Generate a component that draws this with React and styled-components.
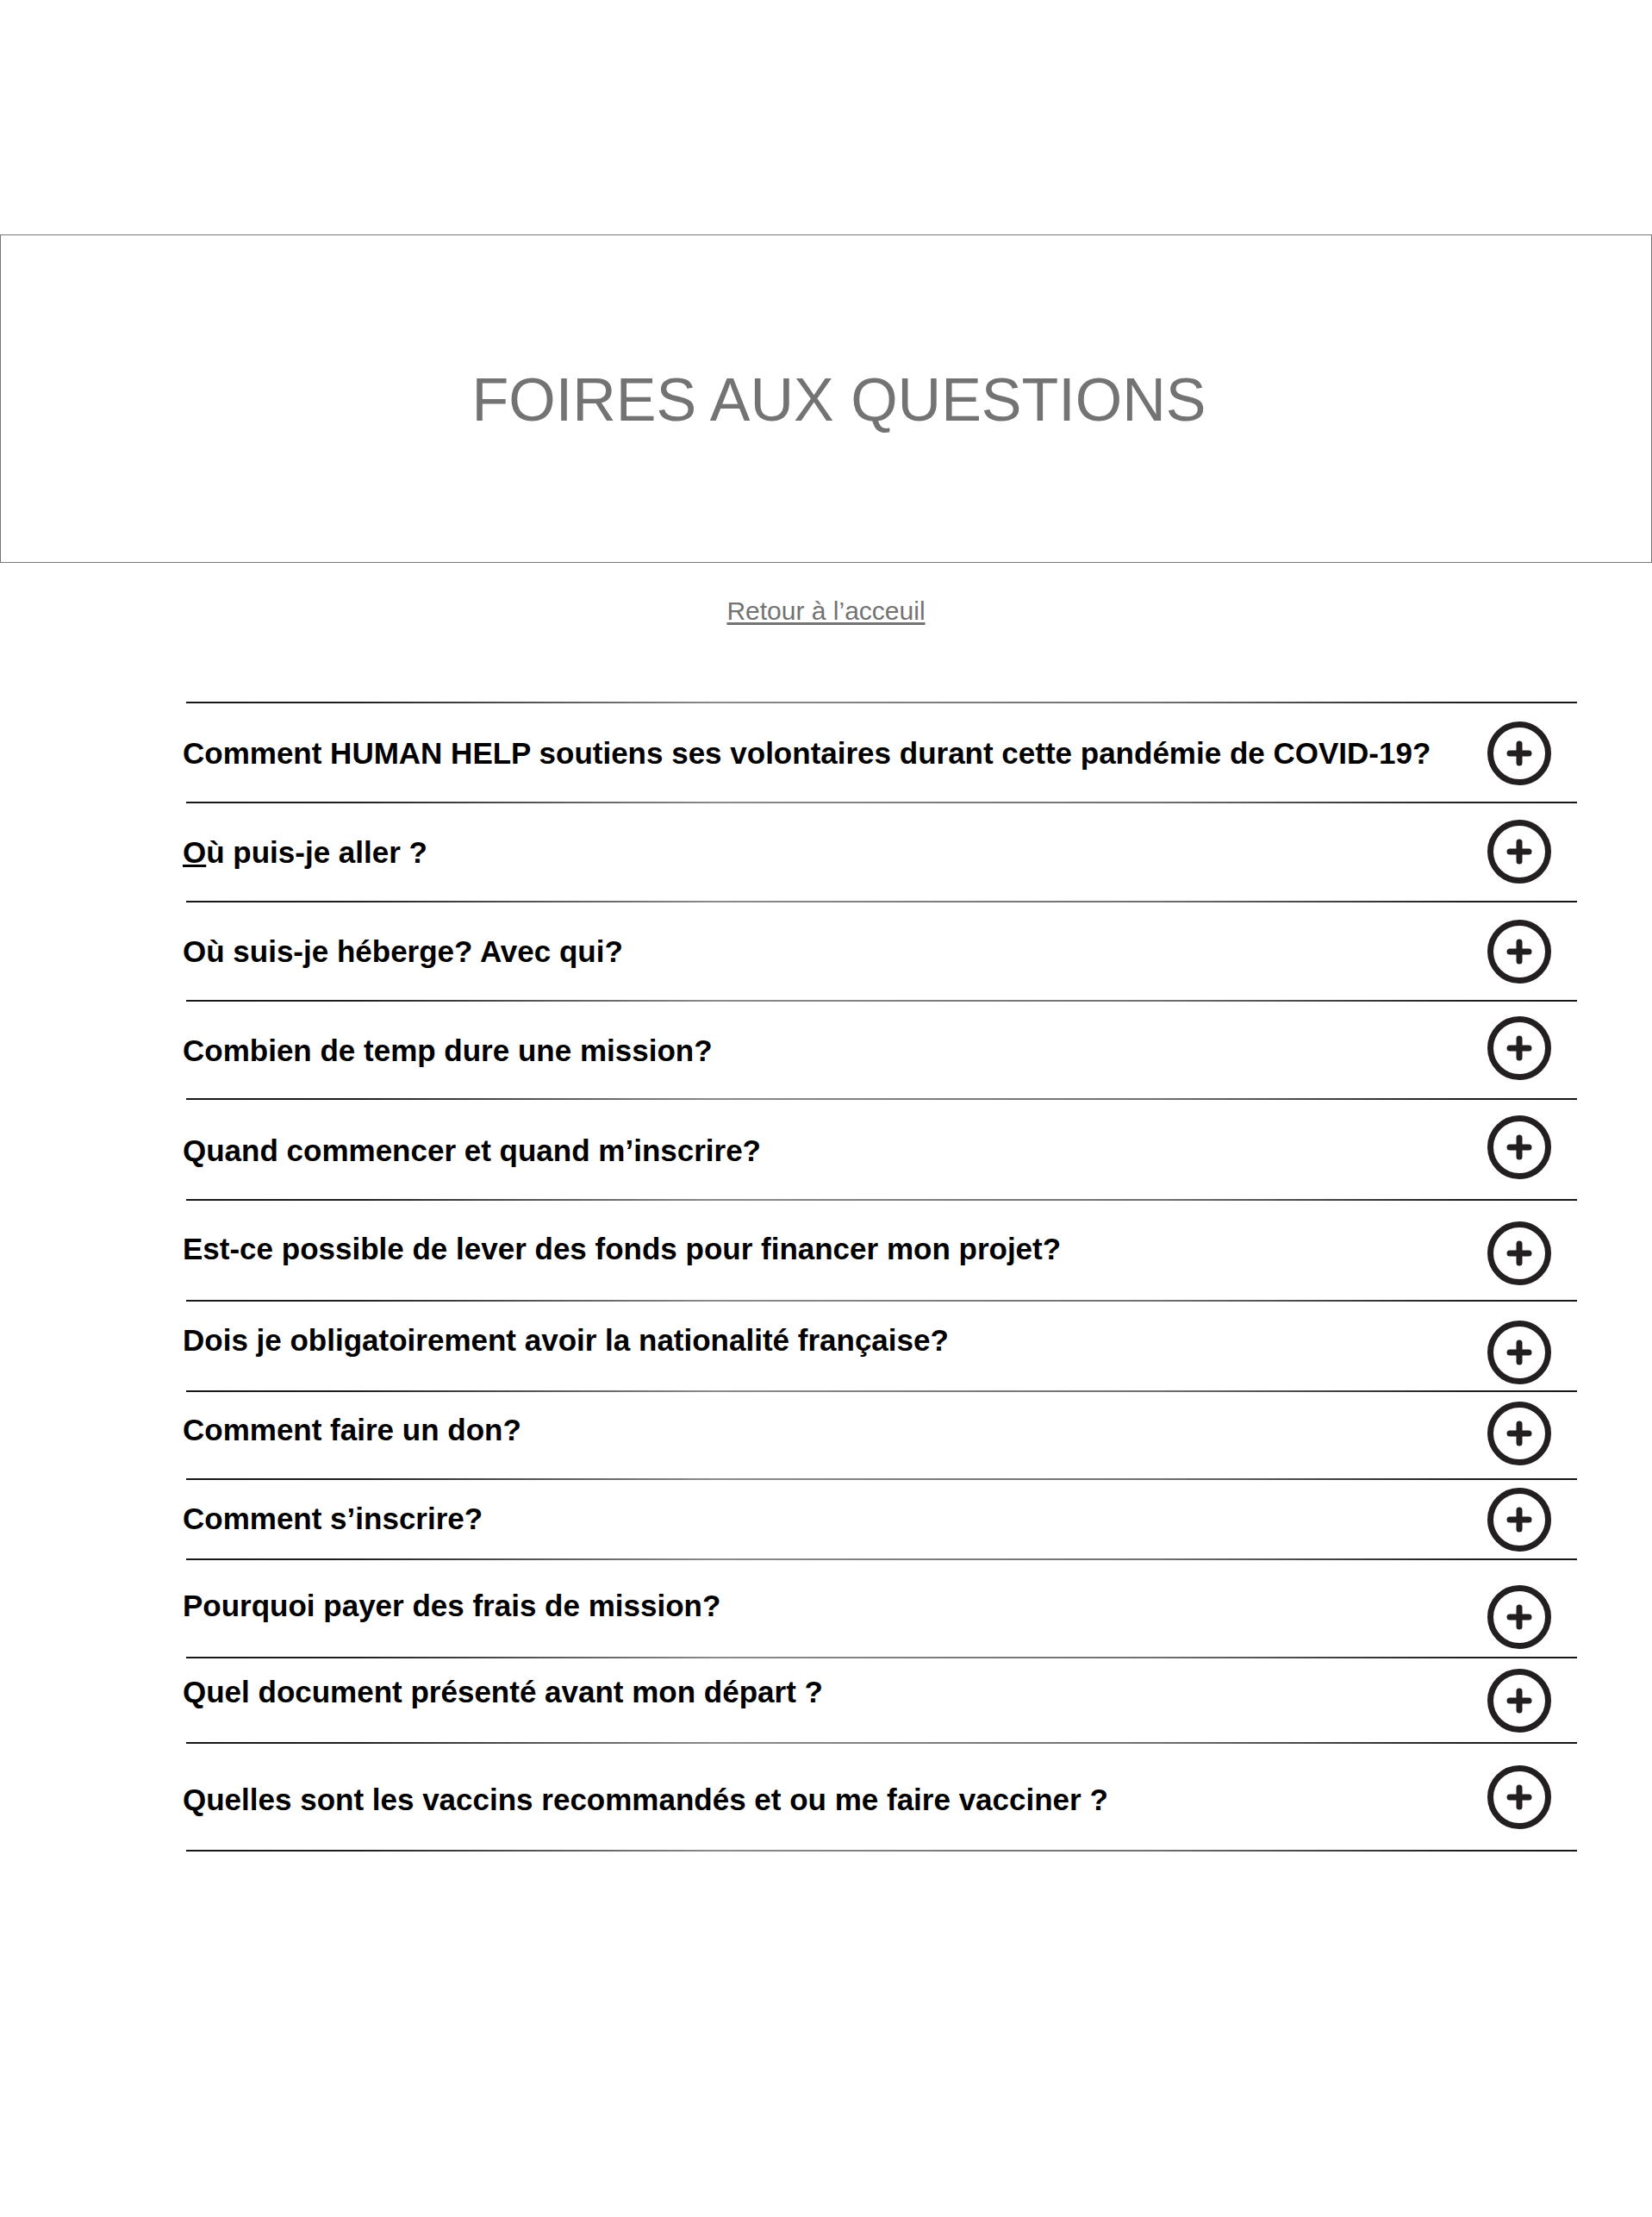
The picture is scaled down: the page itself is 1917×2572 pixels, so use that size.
import React from 'react';
import styled, { createGlobalStyle } from 'styled-components';

const GlobalStyle = createGlobalStyle`
  html, body {
    margin: 0;
    padding: 0;
    background: #ffffff;
  }
  body {
    font-family: 'Liberation Sans', Arial, sans-serif;
  }
  * {
    box-sizing: border-box;
  }
`;

const Page = styled.div`
  width: 1917px;
  min-height: 2572px;
  padding-top: 272px;
  background: #fff;
`;

const Banner = styled.header`
  width: 100%;
  height: 381px;
  border: 1px solid #777777;
  padding: 156px 0 0 30px;
  text-align: center;
`;

const Title = styled.h1`
  margin: 0;
  font-size: 70px;
  line-height: 1;
  font-weight: 400;
  color: #737373;
  letter-spacing: 0;
`;

const BackRow = styled.div`
  margin-top: 41px;
  text-align: center;
`;

const BackLink = styled.a`
  font-size: 30px;
  line-height: 1;
  color: #737373;
  text-decoration: underline;
  text-underline-offset: 3px;
  cursor: pointer;
`;

const FaqList = styled.section`
  width: 1618px;
  margin: 90px 0 0 212px;
  display: flex;
  flex-direction: column;
`;

const Divider = styled.div`
  height: 2px;
  margin-left: 4px;
  background: linear-gradient(
    to right,
    #161616 0%,
    #1e1e1e 12%,
    #8a8a8a 38%,
    #6f6f6f 70%,
    #1e1e1e 92%,
    #161616 100%
  );
`;

const Row = styled.div`
  display: flex;
  justify-content: space-between;
  align-items: flex-start;
  height: ${(p) => p.$h}px;
`;

const Question = styled.p`
  margin: ${(p) => p.$top}px 0 0 0;
  font-size: 35px;
  line-height: 35px;
  font-weight: 700;
  color: #000;
  white-space: nowrap;
`;

const ToggleButton = styled.button`
  margin: ${(p) => p.$top}px 30px 0 0;
  padding: 0;
  width: 74px;
  height: 74px;
  border: none;
  background: transparent;
  cursor: pointer;
  display: flex;
`;

const PlusCircle = () => (
  <svg width="74" height="74" viewBox="0 0 74 74" fill="none">
    <circle cx="37" cy="37" r="33.5" stroke="#231f20" strokeWidth="7" />
    <path
      d="M26 37H48M37 26V48"
      stroke="#231f20"
      strokeWidth="7"
      strokeLinecap="round"
    />
  </svg>
);

const faqs = [
  { q: 'Comment HUMAN HELP soutiens ses volontaires durant cette pandémie de COVID-19?', h: 114, t: 40, i: 21 },
  { q: 'Où puis-je aller ?', h: 113, t: 39, i: 19, underlineFirst: true },
  { q: 'Où suis-je héberge? Avec qui?', h: 113, t: 39, i: 20 },
  { q: 'Combien de temp dure une mission?', h: 112, t: 39, i: 17 },
  { q: 'Quand commencer et quand m’inscrire?', h: 115, t: 41, i: 18 },
  { q: 'Est-ce possible de lever des fonds pour financer mon projet?', h: 115, t: 38, i: 24 },
  { q: 'Dois je obligatoirement avoir la nationalité française?', h: 103, t: 27, i: 22 },
  { q: 'Comment faire un don?', h: 100, t: 26, i: 11 },
  { q: 'Comment s’inscrire?', h: 91, t: 27, i: 9 },
  { q: 'Pourquoi payer des frais de mission?', h: 112, t: 35, i: 29 },
  { q: 'Quel document présenté avant mon départ ?', h: 97, t: 21, i: 12 },
  { q: 'Quelles sont les vaccins recommandés et ou me faire vacciner ?', h: 123, t: 47, i: 25 },
];

function FaqItem({ item }) {
  return (
    <>
      <Divider />
      <Row $h={item.h}>
        <Question $top={item.t}>
          {item.underlineFirst ? (
            <>
              <u>{item.q[0]}</u>
              {item.q.slice(1)}
            </>
          ) : (
            item.q
          )}
        </Question>
        <ToggleButton $top={item.i} aria-label="Ouvrir">
          <PlusCircle />
        </ToggleButton>
      </Row>
    </>
  );
}

function App() {
  return (
    <Page>
      <GlobalStyle />
      <Banner>
        <Title>FOIRES AUX QUESTIONS</Title>
      </Banner>
      <BackRow>
        <BackLink>Retour à l’acceuil</BackLink>
      </BackRow>
      <FaqList>
        {faqs.map((item) => (
          <FaqItem key={item.q} item={item} />
        ))}
        <Divider />
      </FaqList>
    </Page>
  );
}

export default App;
